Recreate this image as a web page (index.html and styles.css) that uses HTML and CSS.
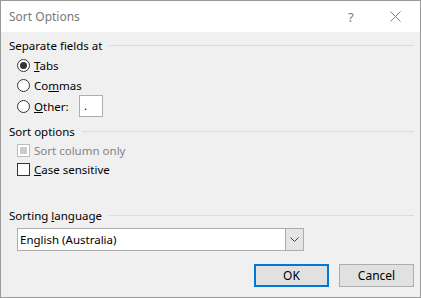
FILE: index.html
```html
<!DOCTYPE html>
<html>
<head>
  <title>Sort Options</title>
  <link rel="stylesheet" href="styles.css">
</head>
<body>
  <div class="dialog">
    <div class="titlebar">
      <span class="title">Sort Options</span>
      <span class="help">?</span>
      <span class="close">
        <svg width="11" height="11" viewBox="0 0 11 11"><path d="M0.5 0.5L10.5 10.5M10.5 0.5L0.5 10.5" stroke="#7a7a7a" stroke-width="1" fill="none"/></svg>
      </span>
    </div>

    <div class="content">
      <div class="group-head">
        <span>Separate fields at</span>
        <div class="rule"></div>
      </div>
      <div class="option">
        <span class="radio checked"></span>
        <span><u>T</u>abs</span>
      </div>
      <div class="option">
        <span class="radio"></span>
        <span>Co<u>m</u>mas</span>
      </div>
      <div class="option other">
        <span class="radio"></span>
        <span class="other-label"><u>O</u>ther:</span>
        <div class="char-box">.</div>
      </div>

      <div class="group-head sort-head">
        <span>Sort options</span>
        <div class="rule"></div>
      </div>
      <div class="option check-row">
        <span class="checkbox disabled"></span>
        <span class="muted">Sort column only</span>
      </div>
      <div class="option check-row">
        <span class="checkbox"></span>
        <span><u>C</u>ase sensitive</span>
      </div>

      <div class="group-head lang-head">
        <span>Sorting <u>l</u>anguage</span>
        <div class="rule"></div>
      </div>
      <div class="select">
        <span class="select-value">English (Australia)</span>
        <span class="select-arrow">
          <svg width="9" height="5" viewBox="0 0 9 5"><path d="M0.5 0.5L4.5 4.5L8.5 0.5" stroke="#444" stroke-width="1" fill="none"/></svg>
        </span>
      </div>

      <div class="buttons">
        <button class="btn default">OK</button>
        <button class="btn">Cancel</button>
      </div>
    </div>
  </div>
</body>
</html>
```

FILE: styles.css
```css
html, body {
  margin: 0;
  padding: 0;
}

body {
  font-family: "Segoe UI", "Noto Sans", "Open Sans", sans-serif;
  font-size: 11.5px;
  color: #000;
  background-color: #f0f0f0;
}

.dialog {
  width: 419px;
  height: 296px;
  border: 1px solid #9a9a9a;
  background-color: #f0f0f0;
  display: flex;
  flex-direction: column;
}

.titlebar {
  height: 31px;
  background-color: #fff;
  display: flex;
  align-items: center;
  color: #7a7a7a;
  font-size: 12px;
}

.title {
  margin-left: 8px;
  flex: 1;
}

.help {
  width: 12px;
  margin-right: 30px;
  font-size: 13px;
}

.close {
  display: flex;
  margin-right: 19px;
}

.content {
  padding: 5px 6px 0 8px;
  display: flex;
  flex-direction: column;
}

.group-head {
  height: 16px;
  display: flex;
  align-items: center;
}

.group-head .rule {
  flex: 1;
  height: 1px;
  background-color: #dcdcdc;
  margin-left: 7px;
}

.option {
  display: flex;
  align-items: center;
  height: 20px;
  padding-left: 8px;
}

.group-head + .option {
  margin-top: 2px;
}

.other {
  height: 22px;
}

.radio {
  width: 11px;
  height: 11px;
  border: 1px solid #333;
  border-radius: 50%;
  background-color: #fff;
  margin-right: 4px;
  display: flex;
  align-items: center;
  justify-content: center;
}

.radio.checked::after {
  content: "";
  width: 7px;
  height: 7px;
  border-radius: 50%;
  background-color: #333;
}

.other-label {
  width: 45px;
}

.char-box {
  width: 24px;
  height: 22px;
  border: 1px solid #adadad;
  background-color: #fff;
  padding-left: 4px;
  box-sizing: border-box;
  line-height: 20px;
}

.sort-head {
  margin-top: 6px;
}

.check-row {
  height: 19px;
}

.checkbox {
  width: 11px;
  height: 11px;
  border: 1px solid #333;
  background-color: #fff;
  margin-right: 4px;
  display: flex;
  align-items: center;
  justify-content: center;
}

.checkbox.disabled {
  border-color: #bcbcbc;
}

.checkbox.disabled::after {
  content: "";
  width: 7px;
  height: 7px;
  background-color: #cccccc;
}

.muted {
  color: #838383;
}

.lang-head {
  margin-top: 28px;
}

.select {
  margin: 5px 0 0 8px;
  width: 287px;
  height: 23px;
  box-sizing: border-box;
  border: 1px solid #adadad;
  background-color: #fff;
  display: flex;
  align-items: stretch;
}

.select-value {
  flex: 1;
  padding-left: 2px;
  display: flex;
  align-items: center;
}

.select-arrow {
  width: 17px;
  background-color: #e5e5e5;
  border-left: 1px solid #adadad;
  display: flex;
  align-items: center;
  justify-content: center;
}

.buttons {
  display: flex;
  justify-content: flex-end;
  gap: 10px;
  margin-top: 13px;
}

.btn {
  width: 75px;
  height: 23px;
  font-family: inherit;
  font-size: 12px;
  color: #000;
  background-color: #e1e1e1;
  border: 1px solid #adadad;
  padding: 0;
  margin: 0;
}

.btn.default {
  border: 2px solid #0078d7;
}
```
